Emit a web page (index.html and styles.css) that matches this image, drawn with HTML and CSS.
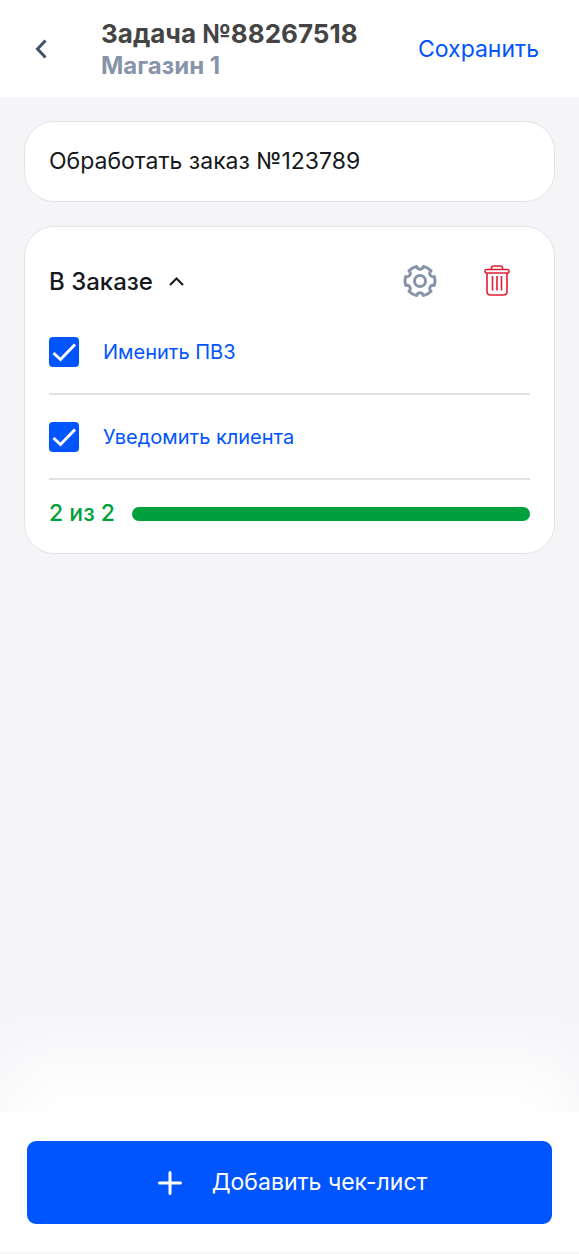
FILE: index.html
```html
<!DOCTYPE html>
<html lang="ru">
<head>
<meta charset="utf-8">
<meta name="viewport" content="width=device-width, initial-scale=1">
<title>Задача №88267518</title>
<link rel="stylesheet" href="styles.css">
</head>
<body class="page">
<header class="header">
  <button class="icon-button back" type="button" aria-label="Назад">
    <svg width="14" height="20" viewBox="0 0 14 20"><path d="M11.500 1.500 3.500 10l8 8.500" fill="none" stroke="#42526e" stroke-width="3"/></svg>
  </button>
  <div class="heading">
    <h1 class="title">Задача №88267518</h1>
    <p class="subtitle">Магазин 1</p>
  </div>
  <button class="save" type="button">Сохранить</button>
</header>
<main class="content">
  <section class="card task">Обработать заказ №123789</section>
  <section class="card checklist">
    <div class="list-head">
      <button class="list-toggle" type="button" aria-expanded="true">
        <span>В Заказе</span>
        <svg width="15" height="9" viewBox="0 0 15 9"><path d="M1 8l6.500-6.500L14 8" fill="none" stroke="#15181c" stroke-width="2"/></svg>
      </button>
      <div class="actions">
        <button class="icon-button" type="button" aria-label="Настройки">
          <svg width="34" height="34" viewBox="-17 -17 34 34" fill="none" stroke="#8794aa" stroke-width="3" stroke-linejoin="round"><path d="M14.300-4.400A15 15 0 0 1 14.300 4.400C10.500 3.400 8.200 7.400 11 10.200A15 15 0 0 1 3.400 14.600C2.300 10.800-2.300 10.800-3.400 14.600A15 15 0 0 1-11 10.200C-8.200 7.400-10.500 3.400-14.300 4.400A15 15 0 0 1-14.300-4.400C-10.500-3.400-8.200-7.400-11-10.200A15 15 0 0 1-3.400-14.600C-2.300-10.800 2.300-10.800 3.400-14.600A15 15 0 0 1 11-10.200C8.200-7.400 10.500-3.400 14.300-4.400Z"/><circle r="5.500"/></svg>
        </button>
        <button class="icon-button" type="button" aria-label="Удалить">
          <svg width="26" height="32" viewBox="0 0 26 32" fill="none" stroke="#e11d35" stroke-width="1.600"><rect x="1" y="4.500" width="24" height="3.500" rx="1.600"/><path d="M7.500 4.500V3Q7.500 1 9.500 1H16.500Q18.500 1 18.500 3V4.500M3 8V26.500Q3 30 6.500 30H19.500Q23 30 23 26.500V8M8.500 11V25.500M13 11V25.500M17.500 11V25.500"/></svg>
        </button>
      </div>
    </div>
    <label class="item"><input class="check" type="checkbox" checked><span>Именить ПВЗ</span></label>
    <label class="item"><input class="check" type="checkbox" checked><span>Уведомить клиента</span></label>
    <div class="summary">
      <span id="done">2 из 2</span>
      <div class="track" role="progressbar" aria-labelledby="done" aria-valuenow="2" aria-valuemin="0" aria-valuemax="2"><div class="bar" style="width:100%"></div></div>
    </div>
  </section>
</main>
<footer class="footer">
  <button class="add" type="button">
    <svg width="24" height="24" viewBox="0 0 24 24"><path d="M12 1.500v21M1.500 12h21" stroke="#fff" stroke-width="3" stroke-linecap="round"/></svg>
    <span>Добавить чек-лист</span>
  </button>
</footer>
</body>
</html>
```
FILE: styles.css
```css
* {
  box-sizing: border-box;
}

.page {
  display: flex;
  flex-direction: column;
  min-height: 100vh;
  margin: 0;
  background: #f5f5f8;
  color: #15181c;
  font-family: Inter, "Noto Sans", sans-serif;
  font-size: 23px;
  line-height: 31px;
}

button {
  padding: 0;
  border: 0;
  background: none;
  color: inherit;
  font: inherit;
  cursor: pointer;
}

svg {
  display: block;
}

.icon-button {
  flex: none;
}

.header {
  display: flex;
  align-items: center;
  padding: 16px 40px 15px 34px;
  background: #fff;
}

.heading {
  flex: 1;
  padding: 2px 0 0 53px;
}

.title,
.subtitle {
  margin: 0;
  font-weight: 700;
  line-height: 32px;
}

.title {
  color: #444;
  font-size: 26px;
}

.subtitle {
  color: #8794aa;
  font-size: 24px;
}

.save {
  color: #0055ff;
}

.content {
  display: flex;
  flex: 1;
  flex-direction: column;
  gap: 24px;
  padding: 24px;
}

.card {
  padding: 24px;
  border: 1px solid #e2e2e9;
  border-radius: 30px;
  background: #fff;
}

.checklist {
  padding-top: 37px;
}

.list-head,
.list-toggle,
.actions {
  display: flex;
  align-items: center;
}

.list-head {
  justify-content: space-between;
  padding-bottom: 12px;
}

.list-toggle {
  gap: 16px;
  font-size: 24px;
  font-weight: 500;
}

.actions {
  gap: 47px;
  padding-right: 20px;
}

.item {
  display: flex;
  align-items: center;
  gap: 24px;
  height: 85px;
  border-bottom: 2px solid #e2e2e2;
  color: #0055ff;
  font-size: 20px;
  line-height: 32px;
}

.check {
  flex: none;
  width: 30px;
  height: 30px;
  margin: 0;
  appearance: none;
  border-radius: 4px;
  background: #0055ff;
}

.check:checked {
  background: #0055ff url("data:image/svg+xml,%3Csvg xmlns='http://www.w3.org/2000/svg' viewBox='0 0 30 30'%3E%3Cpath d='M4.500 16l7 6.500L26 7.500' fill='none' stroke='white' stroke-width='3'/%3E%3C/svg%3E");
}

.summary {
  display: flex;
  align-items: center;
  gap: 17px;
  padding-top: 18px;
  color: #00a03c;
  font-weight: 500;
}

.track {
  flex: 1;
  height: 14px;
  border-radius: 7px;
  background: #e2e2e9;
}

.bar {
  height: 100%;
  border-radius: 7px;
  background: #00a03c;
}

.footer {
  padding: 29px 27px 28px;
  border-bottom: 2px solid #f7f7f7;
  background: #fff;
  box-shadow: 0 -56px 72px #fff;
}

.add {
  display: flex;
  align-items: center;
  justify-content: center;
  gap: 30px;
  width: 100%;
  height: 83px;
  padding-left: 6px;
  border-radius: 9px;
  background: #0055ff;
  color: #fff;
}
```
